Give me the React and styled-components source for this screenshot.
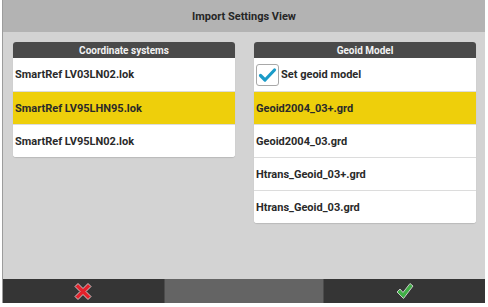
import React from "react";
import styled, { createGlobalStyle } from "styled-components";

const GlobalStyle = createGlobalStyle`
  html, body {
    margin: 0;
    padding: 0;
    background: #ffffff;
  }
  body {
    font-family: Roboto, "Liberation Sans", sans-serif;
  }
`;

const coordinateSystems = [
  "SmartRef LV03LN02.lok",
  "SmartRef LV95LHN95.lok",
  "SmartRef LV95LN02.lok",
];

const geoidModels = [
  "Geoid2004_03+.grd",
  "Geoid2004_03.grd",
  "Htrans_Geoid_03+.grd",
  "Htrans_Geoid_03.grd",
];

const App = () => {
  return (
    <>
      <GlobalStyle />
      <Window>
        <TitleBar>Import Settings View</TitleBar>
        <Content>
          <Panel>
            <PanelHeader>Coordinate systems</PanelHeader>
            {coordinateSystems.map((name) => (
              <Row key={name} selected={name === "SmartRef LV95LHN95.lok"}>
                {name}
              </Row>
            ))}
          </Panel>
          <Panel>
            <PanelHeader>Geoid Model</PanelHeader>
            <Row>
              <CheckBox>
                <svg width="21" height="20" viewBox="0 0 21 20">
                  <path
                    d="M3.5 10.5 L8 15 L17.5 5"
                    fill="none"
                    stroke="#1b9bc8"
                    strokeWidth="3.2"
                    strokeLinecap="round"
                    strokeLinejoin="round"
                  />
                </svg>
              </CheckBox>
              Set geoid model
            </Row>
            {geoidModels.map((name) => (
              <Row key={name} selected={name === "Geoid2004_03+.grd"}>
                {name}
              </Row>
            ))}
          </Panel>
        </Content>
        <BottomBar>
          <BarButton>
            <svg width="22" height="21" viewBox="0 0 22 21">
              <path
                d="M3 5.5 L6 2.5 L11 7.5 L16 2.5 L19 5.5 L14 10.5 L19 15.5 L16 18.5 L11 13.5 L6 18.5 L3 15.5 L8 10.5 Z"
                fill="#e3212b"
                stroke="#c9c9c9"
                strokeWidth="1"
                strokeLinejoin="round"
              />
            </svg>
          </BarButton>
          <BarButton middle />
          <BarButton>
            <svg width="20" height="20" viewBox="0 0 20 20">
              <path
                d="M2 11 L5 8 L8 11.5 L15 2.5 L18 5 L8.5 17.5 Z"
                fill="#3faf45"
                stroke="#c9c9c9"
                strokeWidth="1"
                strokeLinejoin="round"
              />
            </svg>
          </BarButton>
        </BottomBar>
      </Window>
    </>
  );
};

const Window = styled.div`
  display: flex;
  flex-direction: column;
  width: 482px;
  height: 303px;
  margin-left: 2px;
  border-left: 1px solid #9c9c9c;
  background: #d3d3d3;
`;

const TitleBar = styled.div`
  height: 32px;
  display: flex;
  align-items: center;
  justify-content: center;
  background: #b3b3b3;
  color: #262626;
  font-size: 11px;
  font-weight: 700;
`;

const Content = styled.div`
  flex: 1;
  display: flex;
  align-items: flex-start;
  gap: 19px;
  padding: 10px 9px 0 10px;
`;

const Panel = styled.div`
  width: 222px;
  background: #ffffff;
  border-radius: 3px;
  overflow: hidden;
  box-shadow: 0 1px 1px rgba(0, 0, 0, 0.12);
`;

const PanelHeader = styled.div`
  height: 16px;
  display: flex;
  align-items: center;
  justify-content: center;
  background: #4a4a4a;
  color: #f2f2f2;
  font-size: 10px;
  font-weight: 700;
`;

const Row = styled.div`
  height: 32px;
  display: flex;
  align-items: center;
  gap: 2px;
  padding-left: 2px;
  border-top: 1px solid #dcdcdc;
  background: ${(p) => (p.selected ? "#eecf0b" : "#ffffff")};
  color: #2a2a2a;
  font-size: 11px;
  font-weight: 700;

  &:nth-child(2) {
    height: 33px;
    border-top: none;
  }
`;

const CheckBox = styled.div`
  width: 21px;
  height: 20px;
  border: 1px solid #a8a8a8;
  border-radius: 3px;
  background: #ffffff;
  display: flex;
  align-items: center;
  justify-content: center;
`;

const BottomBar = styled.div`
  height: 24px;
  display: grid;
  grid-template-columns: 1fr 1fr 1fr;
  background: #353535;
`;

const BarButton = styled.div`
  display: flex;
  align-items: center;
  justify-content: center;
  background: ${(p) => (p.middle ? "#646464" : "#353535")};
  border-left: ${(p) => (p.middle ? "1px solid #4c4c4c" : "none")};
  border-right: ${(p) => (p.middle ? "1px solid #4c4c4c" : "none")};
`;

export default App;
